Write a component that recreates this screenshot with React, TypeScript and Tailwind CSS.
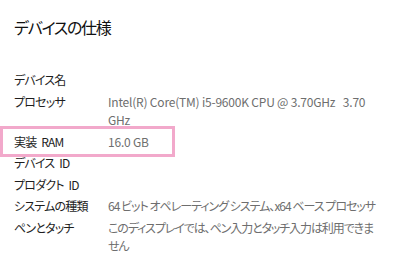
type Row = { label: string; value: string; tight: string }

const rows: Row[] = [
  { label: 'デバイス名', value: '', tight: '' },
  { label: 'プロセッサ', value: 'Intel(R) Core(TM) i5-9600K CPU @ 3.70GHz   3.70 GHz', tight: 'tracking-[-0.2px]' },
  { label: '実装 RAM', value: '16.0 GB', tight: 'tracking-[-0.2px]' },
  { label: 'デバイス ID', value: '', tight: '' },
  { label: 'プロダクト ID', value: '', tight: '' },
  { label: 'システムの種類', value: '64 ビット オペレーティング システム、x64 ベース プロセッサ', tight: 'tracking-[-1px]' },
  { label: 'ペンとタッチ', value: 'このディスプレイでは、ペン入力とタッチ入力は利用できません', tight: 'tracking-[-1.1px]' },
]

export default function App() {
  return (
    <div className="h-[259px] w-[400px] overflow-hidden bg-white font-['Noto_Sans_CJK_JP',sans-serif] [font-feature-settings:'palt']">
      <h2 className="pl-[14px] pt-[15px] text-[16px] leading-[24px] tracking-[-1.3px] text-[#111]">デバイスの仕様</h2>
      <div className="mt-[32px] flex flex-col gap-[3px]">
        {rows.map((r) => (
          <div
            key={r.label}
            className={
              r.label === '実装 RAM'
                ? 'relative flex text-[12px] leading-[18.5px]'
                : 'flex text-[12px] leading-[18.5px]'
            }
          >
            <div className="w-[108px] shrink-0 pl-[14px] tracking-[-0.8px] text-[#1e1e1e] [word-spacing:3px]">{r.label}</div>
            <div className={'w-[274px] whitespace-pre-wrap text-[#6e6e6e] ' + r.tight}>{r.value}</div>
            {r.label === '実装 RAM' && (
              <div className="absolute -top-[7px] left-0 h-[31px] w-[175px] border-[3px] border-[#f2a9cb]" />
            )}
          </div>
        ))}
      </div>
    </div>
  )
}
